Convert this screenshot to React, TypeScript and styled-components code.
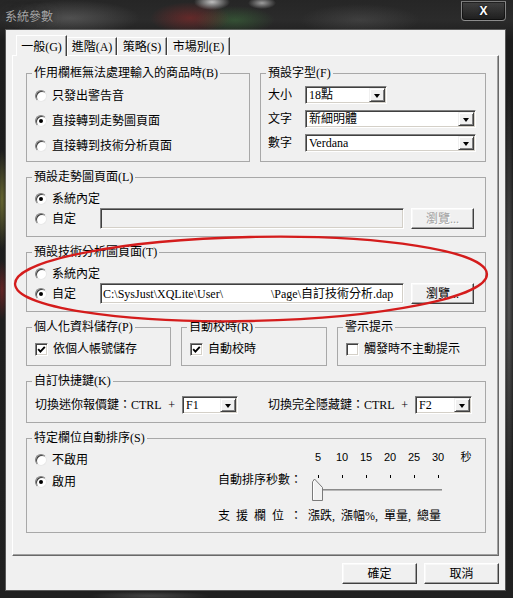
import React from "react";
import styled, { createGlobalStyle, css } from "styled-components";

const GlobalStyle = createGlobalStyle`
  html, body { margin: 0; padding: 0; background: #151515; }
  body { width: 513px; height: 598px; overflow: hidden; }
  *, *::before, *::after { box-sizing: border-box; }
`;

const FONT = `"Liberation Serif", "Noto Sans CJK TC", "Noto Sans CJK JP", serif`;
const SANS = `"Liberation Sans", "Noto Sans CJK TC", sans-serif`;

const Window = styled.div`
  position: relative;
  width: 513px;
  height: 598px;
  display: flex;
  flex-direction: column;
  padding: 0 8px 8px 6px;
  font-family: ${FONT};
  font-size: 12px;
  line-height: 14px;
  color: #000;
  background:
    radial-gradient(ellipse 18px 8px at 212px 2px, rgba(255,255,255,0.7), transparent),
    radial-gradient(ellipse 14px 6px at 262px 3px, rgba(255,255,255,0.55), transparent),
    radial-gradient(ellipse 70px 18px at 70px 18px, rgba(150,150,150,0.35), transparent),
    radial-gradient(ellipse 40px 16px at 190px 18px, rgba(170,40,40,0.45), transparent),
    radial-gradient(ellipse 40px 14px at 235px 20px, rgba(70,150,70,0.35), transparent),
    radial-gradient(ellipse 60px 16px at 360px 20px, rgba(110,110,110,0.3), transparent),
    radial-gradient(ellipse 6px 50px at 2px 200px, rgba(150,150,60,0.6), transparent),
    radial-gradient(ellipse 6px 30px at 2px 290px, rgba(170,40,40,0.5), transparent),
    radial-gradient(ellipse 5px 220px at 509px 300px, rgba(150,150,150,0.45), transparent),
    radial-gradient(ellipse 60px 5px at 150px 596px, rgba(120,120,120,0.4), transparent),
    linear-gradient(180deg, #262626 0px, #2b2b2b 20px, #1c1c1c 40px, #202020 100%);
`;

const TitleBar = styled.div`
  height: 30px;
  flex: none;
  display: flex;
  align-items: flex-start;
`;

const Title = styled.div`
  margin-top: 9px;
  margin-left: -1px;
  color: #a4a4a4;
  text-shadow: 0 0 4px rgba(20, 20, 20, 0.8), 0 0 8px rgba(90, 90, 90, 0.6);
  font-family: "Noto Sans CJK TC", sans-serif;
  font-size: 12px;
  line-height: 14px;
`;

const CloseButton = styled.div`
  margin-left: auto;
  margin-top: 1px;
  margin-right: -1px;
  width: 45px;
  height: 20px;
  border: 1px solid rgba(200, 200, 200, 0.55);
  border-radius: 0 0 4px 4px;
  background: linear-gradient(180deg, rgba(255, 255, 255, 0.12), rgba(0, 0, 0, 0.3));
  box-shadow: inset 0 0 0 1px rgba(0, 0, 0, 0.5);
  display: flex;
  align-items: center;
  justify-content: center;
  color: #fff;
  font: bold 12px ${SANS};
  text-shadow: 0 0 3px #000;
`;

const Client = styled.div`
  flex: 1;
  display: flex;
  flex-direction: column;
  padding: 5px 6px 0 6px;
  background: #f0f0f0;
  box-shadow: 0 0 0 1px rgba(255, 255, 255, 0.25);
`;

const TabStrip = styled.div`
  height: 20px;
  flex: none;
  display: flex;
  align-items: flex-end;
  padding-left: 4px;
  position: relative;
  z-index: 1;
`;

const Tab = styled.div<{ $active?: boolean; $w: number }>`
  width: ${(p) => p.$w}px;
  height: ${(p) => (p.$active ? 21 : 18)}px;
  margin-bottom: ${(p) => (p.$active ? -1 : 0)}px;
  display: flex;
  align-items: center;
  justify-content: center;
  padding-top: ${(p) => (p.$active ? 1 : 0)}px;
  background: #f0f0f0;
  border-style: solid;
  border-width: 1px 1px 0 1px;
  border-color: #fff #404040 transparent #fff;
  box-shadow: inset -1px 0 0 #a0a0a0;
  white-space: nowrap;
`;

const Panel = styled.div`
  flex: 1;
  display: flex;
  flex-direction: column;
  gap: 8px;
  padding: 10px 12px 0 13px;
  border: 1px solid;
  border-color: #fff #696969 #696969 #fff;
  box-shadow: inset -1px -1px 0 #a0a0a0;
`;

const Row = styled.div<{ $cols: string }>`
  display: grid;
  grid-template-columns: ${(p) => p.$cols};
  column-gap: 10px;
`;

const Group = styled.fieldset<{ $h: number }>`
  margin: 0;
  padding: 0;
  min-width: 0;
  height: ${(p) => p.$h}px;
  border: 1px solid #a8a8a8;
`;

const Legend = styled.legend`
  margin-left: 5px;
  padding: 0 2px;
  line-height: 14px;
  white-space: nowrap;
`;

const GroupBody = styled.div<{ $pad: string }>`
  padding: ${(p) => p.$pad};
  display: flex;
  flex-direction: column;
`;

const OptionRow = styled.div<{ $h: number }>`
  height: ${(p) => p.$h}px;
  display: flex;
  align-items: center;
  gap: 5px;
  white-space: nowrap;
`;

const RadioDot = styled.span<{ $on?: boolean }>`
  position: relative;
  flex: none;
  width: 12px;
  height: 12px;
  border-radius: 50%;
  background: #fff;
  border: 1px solid;
  border-color: #808080 #e8e8e8 #e8e8e8 #808080;
  box-shadow: inset 1px 1px 0 #404040;
  ${(p) =>
    p.$on &&
    css`
      &::after {
        content: "";
        position: absolute;
        left: 3px;
        top: 3px;
        width: 4px;
        height: 4px;
        border-radius: 50%;
        background: #000;
      }
    `}
`;

const RadioLabel = styled.span<{ $w?: number }>`
  display: flex;
  align-items: center;
  gap: 5px;
  flex: none;
  ${(p) => p.$w && css`width: ${p.$w}px;`}
`;

const CheckBox = styled.span`
  flex: none;
  width: 13px;
  height: 13px;
  background: #fff;
  border: 1px solid;
  border-color: #808080 #fff #fff #808080;
  box-shadow: inset 1px 1px 0 #404040, inset -1px -1px 0 #d4d0c8;
  display: flex;
  align-items: center;
  justify-content: center;
`;

const FieldLabel = styled.span<{ $w?: number }>`
  flex: none;
  ${(p) => p.$w && css`width: ${p.$w}px;`}
  white-space: nowrap;
`;

const HotkeyLabel = styled.span`
  white-space: nowrap;
  word-spacing: 4px;
`;

const Combo = styled.div<{ $w: number }>`
  flex: none;
  width: ${(p) => p.$w}px;
  height: 18px;
  display: flex;
  align-items: center;
  padding: 1px;
  background: #fff;
  border: 1px solid;
  border-color: #808080 #fff #fff #808080;
  box-shadow: inset 1px 1px 0 #404040, inset -1px -1px 0 #d4d0c8;
`;

const ComboText = styled.span`
  flex: 1;
  padding-left: 2px;
  white-space: nowrap;
  overflow: hidden;
`;

const ComboArrow = styled.span`
  flex: none;
  width: 16px;
  height: 14px;
  display: flex;
  align-items: center;
  justify-content: center;
  background: #f0f0f0;
  border: 1px solid;
  border-color: #f0f0f0 #404040 #404040 #f0f0f0;
  box-shadow: inset 1px 1px 0 #fff, inset -1px -1px 0 #808080;
  &::after {
    content: "";
    border-left: 3.5px solid transparent;
    border-right: 3.5px solid transparent;
    border-top: 4px solid #000;
    margin-top: 1px;
  }
`;

const PathRow = styled.div`
  height: 21px;
  display: flex;
  align-items: center;
`;

const PathField = styled.div<{ $disabled?: boolean }>`
  width: 304px;
  height: 21px;
  flex: none;
  display: flex;
  align-items: center;
  padding: 0 2px;
  white-space: nowrap;
  overflow: hidden;
  background: ${(p) => (p.$disabled ? "#f0f0f0" : "#fff")};
  border: 1px solid;
  border-color: #808080 #fff #fff #808080;
  box-shadow: inset 1px 1px 0 #404040, inset -1px -1px 0 #d4d0c8;
`;

const HiddenSegment = styled.span`
  display: inline-block;
  width: 48px;
`;

const Button = styled.button<{ $w: number; $disabled?: boolean }>`
  flex: none;
  width: ${(p) => p.$w}px;
  height: 21px;
  margin: 0;
  padding: 0;
  font: inherit;
  line-height: 14px;
  background: #f0f0f0;
  border: 1px solid;
  border-color: #fff #404040 #404040 #fff;
  box-shadow: inset -1px -1px 0 #a0a0a0, inset 1px 1px 0 #f8f8f8;
  color: ${(p) => (p.$disabled ? "#a0a0a0" : "#000")};
  text-shadow: ${(p) => (p.$disabled ? "1px 1px 0 #fff" : "none")};
`;

const PathButton = styled(Button)`
  margin-left: 7px;
`;

const FontGrid = styled.div`
  display: flex;
  flex-direction: column;
`;

const HotkeyRow = styled.div`
  height: 18px;
  display: grid;
  grid-template-columns: 147px 56px 30px 147px 57px;
  align-items: center;
  white-space: nowrap;
`;

const SortBody = styled.div`
  padding: 6px 0 0 8px;
  display: grid;
  grid-template-columns: 183px 1fr;
`;

const RadioColumn = styled.div`
  display: flex;
  flex-direction: column;
  gap: 4px;
`;

const SliderColumn = styled.div`
  display: flex;
  flex-direction: column;
`;

const ScaleRow = styled.div`
  margin-left: 88px;
  height: 13px;
  display: flex;
  align-items: center;
  font-family: ${SANS};
  font-size: 11px;
  line-height: 13px;
`;

const ScaleCell = styled.span<{ $w: number }>`
  width: ${(p) => p.$w}px;
  text-align: center;
  flex: none;
`;

const SliderRow = styled.div`
  margin-top: 6px;
  display: flex;
  align-items: flex-start;
`;

const SliderLabel = styled.span`
  width: 88px;
  flex: none;
  margin-top: 3px;
  white-space: nowrap;
`;

const SupportText = styled.div`
  margin-top: 7px;
  word-spacing: 3px;
  white-space: nowrap;
`;

const Footer = styled.div`
  height: 34px;
  flex: none;
  display: flex;
  justify-content: flex-end;
  align-items: flex-start;
  gap: 7px;
  padding-top: 7px;
`;

const Annotation = styled.svg`
  position: absolute;
  left: 0;
  top: 0;
  width: 513px;
  height: 598px;
  pointer-events: none;
`;

const Check = () => (
  <svg width="9" height="9" viewBox="0 0 9 9">
    <polyline points="1.2,4.2 3.4,6.6 7.8,1.8" fill="none" stroke="#000" strokeWidth="1.9" />
  </svg>
);

const Radio = ({ on, label, w }: { on?: boolean; label: string; w?: number }) => (
  <RadioLabel $w={w}>
    <RadioDot $on={on} />
    <span>{label}</span>
  </RadioLabel>
);

const ComboBox = ({ w, value }: { w: number; value: string }) => (
  <Combo $w={w}>
    <ComboText>{value}</ComboText>
    <ComboArrow />
  </Combo>
);

const SliderGraphic = () => {
  const ticks = [12, 36, 60, 84, 108, 132];
  return (
    <svg width="140" height="32" viewBox="0 0 140 32">
      {ticks.map((x) => (
        <line key={x} x1={x + 0.5} y1={5} x2={x + 0.5} y2={8} stroke="#000" strokeWidth="1" />
      ))}
      <line x1="16" y1="19.5" x2="136" y2="19.5" stroke="#8a8a8a" strokeWidth="1" />
      <line x1="16" y1="20.5" x2="136" y2="20.5" stroke="#b8b8b8" strokeWidth="1" />
      <polygon points="6.5,12 8.5,9 16.5,17.5 16.5,30.5 6.5,30.5" fill="#f2f2f2" stroke="#7a7a7a" strokeWidth="1" />
      <polyline points="7.5,29.5 7.5,12.3 8.6,10.6" fill="none" stroke="#fff" strokeWidth="1" />
    </svg>
  );
};

export default function App() {
  return (
    <>
      <GlobalStyle />
      <Window>
        <TitleBar>
          <Title>系統參數</Title>
          <CloseButton>X</CloseButton>
        </TitleBar>
        <Client>
          <TabStrip>
            <Tab $active $w={51}>一般(G)</Tab>
            <Tab $w={50}>進階(A)</Tab>
            <Tab $w={50}>策略(S)</Tab>
            <Tab $w={63}>市場別(E)</Tab>
          </TabStrip>
          <Panel>
            <Row $cols="224px 1fr">
              <Group $h={96}>
                <Legend>作用欄框無法處理輸入的商品時(B)</Legend>
                <GroupBody $pad="3px 0 0 8px">
                  <OptionRow $h={25}><Radio label="只發出警告音" /></OptionRow>
                  <OptionRow $h={25}><Radio on label="直接轉到走勢圖頁面" /></OptionRow>
                  <OptionRow $h={25}><Radio label="直接轉到技術分析頁面" /></OptionRow>
                </GroupBody>
              </Group>
              <Group $h={96}>
                <Legend>預設字型(F)</Legend>
                <GroupBody $pad="3px 0 0 7px">
                  <FontGrid>
                    <OptionRow $h={24}>
                      <FieldLabel $w={32}>大小</FieldLabel>
                      <ComboBox w={82} value="18點" />
                    </OptionRow>
                    <OptionRow $h={24}>
                      <FieldLabel $w={32}>文字</FieldLabel>
                      <ComboBox w={171} value="新細明體" />
                    </OptionRow>
                    <OptionRow $h={24}>
                      <FieldLabel $w={32}>數字</FieldLabel>
                      <ComboBox w={171} value="Verdana" />
                    </OptionRow>
                  </FontGrid>
                </GroupBody>
              </Group>
            </Row>

            <Group $h={67}>
              <Legend>預設走勢圖頁面(L)</Legend>
              <GroupBody $pad="5px 11px 0 8px">
                <OptionRow $h={19}><Radio on label="系統內定" /></OptionRow>
                <PathRow>
                  <Radio label="自定" w={65} />
                  <PathField $disabled />
                  <PathButton $w={63} $disabled>瀏覽...</PathButton>
                </PathRow>
              </GroupBody>
            </Group>

            <Group $h={67}>
              <Legend>預設技術分析圖頁面(T)</Legend>
              <GroupBody $pad="5px 11px 0 8px">
                <OptionRow $h={19}><Radio label="系統內定" /></OptionRow>
                <PathRow>
                  <Radio on label="自定" w={65} />
                  <PathField>
                    C:\SysJust\XQLite\User\<HiddenSegment />\Page\自訂技術分析.dap
                  </PathField>
                  <PathButton $w={63}>瀏覽...</PathButton>
                </PathRow>
              </GroupBody>
            </Group>

            <Row $cols="145px 146px 1fr">
              <Group $h={46}>
                <Legend>個人化資料儲存(P)</Legend>
                <GroupBody $pad="7px 0 0 8px">
                  <OptionRow $h={16}><CheckBox><Check /></CheckBox><span>依個人帳號儲存</span></OptionRow>
                </GroupBody>
              </Group>
              <Group $h={46}>
                <Legend>自動校時(R)</Legend>
                <GroupBody $pad="7px 0 0 8px">
                  <OptionRow $h={16}><CheckBox><Check /></CheckBox><span>自動校時</span></OptionRow>
                </GroupBody>
              </Group>
              <Group $h={46}>
                <Legend>警示提示</Legend>
                <GroupBody $pad="7px 0 0 8px">
                  <OptionRow $h={16}><CheckBox /><span>觸發時不主動提示</span></OptionRow>
                </GroupBody>
              </Group>
            </Row>

            <Group $h={49}>
              <Legend>自訂快捷鍵(K)</Legend>
              <GroupBody $pad="8px 0 0 8px">
                <HotkeyRow>
                  <HotkeyLabel>切換迷你報價鍵：CTRL +</HotkeyLabel>
                  <ComboBox w={56} value="F1" />
                  <span />
                  <HotkeyLabel>切換完全隱藏鍵：CTRL +</HotkeyLabel>
                  <ComboBox w={57} value="F2" />
                </HotkeyRow>
              </GroupBody>
            </Group>

            <Group $h={102}>
              <Legend>特定欄位自動排序(S)</Legend>
              <SortBody>
                <RadioColumn>
                  <OptionRow $h={18}><Radio label="不啟用" /></OptionRow>
                  <OptionRow $h={18}><Radio on label="啟用" /></OptionRow>
                </RadioColumn>
                <SliderColumn>
                  <ScaleRow>
                    {["5", "10", "15", "20", "25", "30"].map((n) => (
                      <ScaleCell key={n} $w={24}>{n}</ScaleCell>
                    ))}
                    <ScaleCell $w={32}>秒</ScaleCell>
                  </ScaleRow>
                  <SliderRow>
                    <SliderLabel>自動排序秒數：</SliderLabel>
                    <SliderGraphic />
                  </SliderRow>
                  <SupportText>支 援 欄 位 ： 漲跌, 漲幅%, 單量, 總量</SupportText>
                </SliderColumn>
              </SortBody>
            </Group>
          </Panel>
          <Footer>
            <Button $w={75}>確定</Button>
            <Button $w={75}>取消</Button>
          </Footer>
        </Client>
        <Annotation viewBox="0 0 513 598">
          <ellipse
            cx="251"
            cy="279"
            rx="236"
            ry="42"
            transform="rotate(-1.2 251 279)"
            fill="none"
            stroke="#d41c1c"
            strokeWidth="2.3"
          />
        </Annotation>
      </Window>
    </>
  );
}
